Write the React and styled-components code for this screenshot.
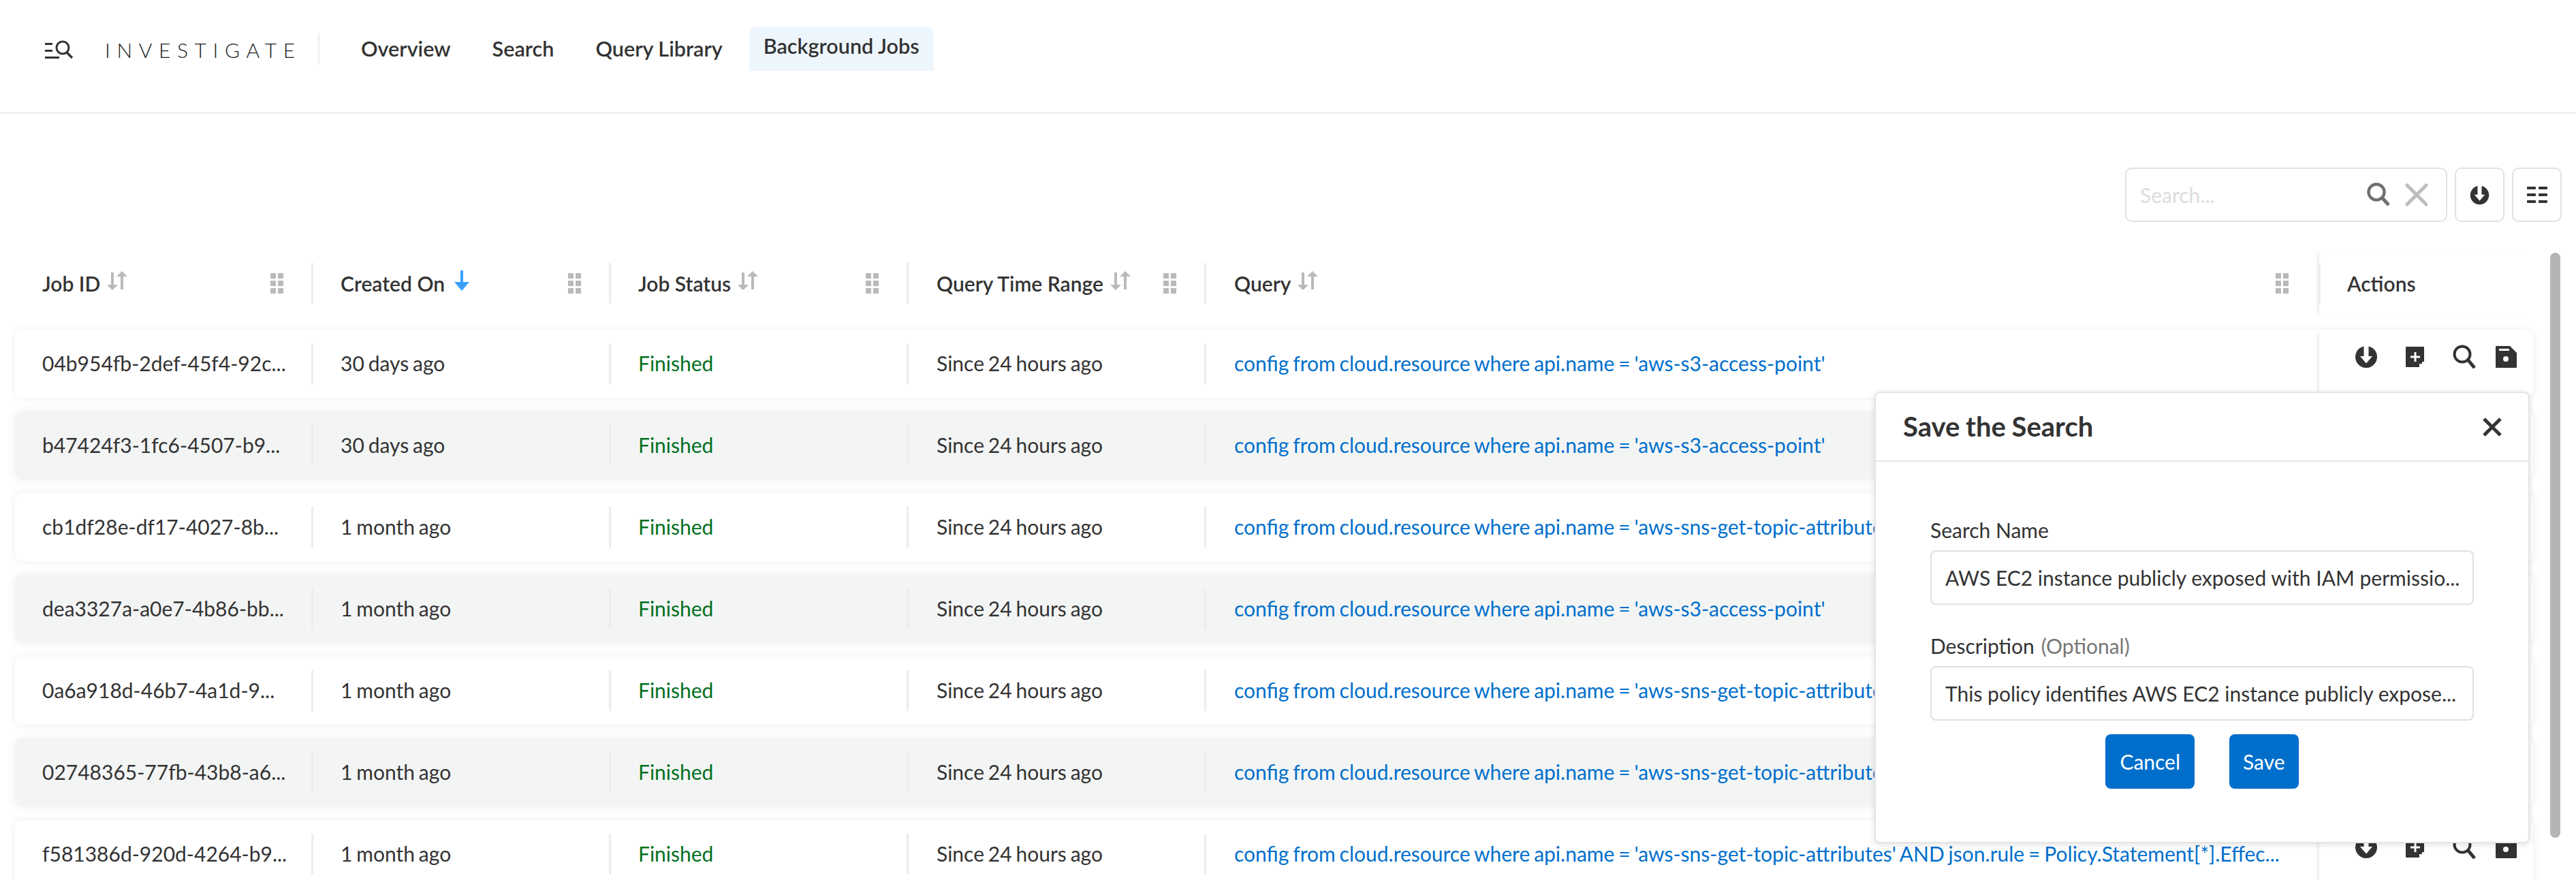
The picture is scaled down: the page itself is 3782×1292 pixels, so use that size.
import React from "react";
import styled, { createGlobalStyle } from "styled-components";

const GlobalStyle = createGlobalStyle`
  * { box-sizing: border-box; }
  html, body { margin: 0; padding: 0; background: #fff; }
  body {
    font-family: Lato, "Open Sans", sans-serif;
    color: #333;
    width: 3782px;
    height: 1292px;
    overflow: hidden;
  }
`;

const Page = styled.div`
  position: relative;
  width: 3782px;
  height: 1292px;
  overflow: hidden;
`;

const Header = styled.header`
  height: 167px;
  border-bottom: 2px solid #ececec;
  display: flex;
  align-items: flex-start;
  padding: 39px 0 0 66px;
`;

const LogoIcon = styled.svg`
  width: 44px;
  height: 30px;
  margin-top: 20px;
  flex: none;
`;

const LogoText = styled.div`
  font-size: 30px;
  font-weight: 300;
  letter-spacing: 9.6px;
  line-height: 36px;
  margin: 16px 0 0 44px;
  width: 313px;
  white-space: nowrap;
  color: #1c1c1c;
`;

const Divider = styled.div`
  width: 2px;
  height: 46px;
  background: #ececec;
  margin-top: 10px;
`;

const Nav = styled.nav`
  display: flex;
  align-items: flex-start;
  margin-left: 61px;
`;

const NavItem = styled.div`
  height: 65px;
  padding: ${(p) => (p.active ? "11px 21px 0" : "15px 0 0")};
  margin-right: ${(p) => (p.active ? "0" : "61px")};
  margin-left: ${(p) => (p.active ? "-22px" : "0")};
  font-size: 30.6px;
  font-weight: 600;
  line-height: 36px;
  white-space: nowrap;
  background: ${(p) => (p.active ? "#eef6fd" : "transparent")};
  border-radius: ${(p) => (p.active ? "10px 10px 0 0" : "0")};
`;

const Toolbar = styled.div`
  display: flex;
  justify-content: flex-end;
  gap: 11px;
  margin-top: 79px;
  padding-right: 21px;
`;

const SearchBox = styled.div`
  width: 473px;
  height: 80px;
  border: 2px solid #e2e2e2;
  border-radius: 10px;
  display: flex;
  align-items: center;
  padding: 0 26px 0 20px;
`;

const Placeholder = styled.span`
  flex: 1;
  font-size: 30px;
  color: #dcdcdc;
`;

const SearchIcon = styled.svg`
  width: 37px;
  height: 36px;
  margin-right: 20px;
  flex: none;
`;

const ClearIcon = styled.svg`
  width: 34px;
  height: 34px;
  flex: none;
`;

const ToolButton = styled.div`
  width: 73px;
  height: 80px;
  border: 2px solid #e2e2e2;
  border-radius: 10px;
  display: flex;
  align-items: center;
  justify-content: center;
`;

const Table = styled.div`
  margin-top: 40px;
  padding-left: 22px;
  width: 3719px;
`;

const HeadRow = styled.div`
  display: flex;
  height: 100px;
  margin-bottom: 18px;
`;

const HeadCell = styled.div`
  width: ${(p) => p.w}px;
  flex: none;
  display: flex;
  align-items: center;
  padding: 0 0 0 ${(p) => p.pad}px;
  font-size: 30px;
  font-weight: 600;
  white-space: nowrap;
  position: relative;
  ${(p) =>
    p.sep &&
    `&::after { content: ""; position: absolute; right: -2px; top: 20px; bottom: 20px; width: 3px; background: #ececec; }`}
`;

const ActionsHead = styled.div`
  flex: 1;
  display: flex;
  align-items: center;
  padding-left: 41px;
  font-size: 30px;
  font-weight: 600;
  box-shadow: -5px 0 6px -4px rgba(0, 0, 0, 0.12);
`;

const SortSvg = styled.svg`
  width: 30px;
  height: 30px;
  margin: -8px 0 0 10px;
  flex: none;
`;

const GripSvg = styled.svg`
  width: 20px;
  height: 30px;
  position: absolute;
  right: ${(p) => (p.last ? 44 : 41)}px;
  top: 35px;
`;

const Rows = styled.div`
  display: flex;
  flex-direction: column;
  gap: 20px;
`;

const Row = styled.div`
  height: 100px;
  display: flex;
  flex: none;
  border-radius: 10px;
  background: ${(p) => (p.alt ? "#f3f5f5" : "#fff")};
  box-shadow: 0 0 14px rgba(0, 0, 0, 0.07);
`;

const Cell = styled.div`
  width: ${(p) => p.w}px;
  flex: none;
  display: flex;
  align-items: center;
  padding: 0 0 0 ${(p) => p.pad}px;
  font-size: 30px;
  font-weight: 400;
  word-spacing: -1.8px;
  color: ${(p) => p.color || "#333"};
  position: relative;
  ${(p) =>
    p.sep &&
    `&::after { content: ""; position: absolute; right: -2px; top: 20px; bottom: 20px; width: 3px; background: #ececec; }`}
`;

const CellText = styled.span`
  display: block;
  white-space: nowrap;
  overflow: hidden;
  text-overflow: ellipsis;
  margin-top: -2px;
`;

const ActionsCell = styled.div`
  flex: 1;
  display: flex;
  align-items: flex-start;
  padding: 22px 0 0 51px;
  background: #fff;
  border-radius: 0 10px 10px 0;
  box-shadow: -5px 0 6px -4px rgba(0, 0, 0, 0.12);
`;

const IconSlot = styled.svg`
  width: 36px;
  height: 36px;
  flex: none;
  margin-right: ${(p) => p.gap}px;
`;

const Scrollbar = styled.div`
  position: absolute;
  left: 3744px;
  top: 371px;
  width: 15px;
  height: 859px;
  background: #b5b5b5;
  border-radius: 8px;
`;

const Modal = styled.div`
  position: absolute;
  left: 2752px;
  top: 575px;
  width: 962px;
  height: 663px;
  background: #fff;
  border: 2px solid #e4e4e4;
  border-radius: 8px;
  box-shadow: 0 2px 10px rgba(0, 0, 0, 0.12);
  display: flex;
  flex-direction: column;
`;

const ModalHeader = styled.div`
  height: 101px;
  border-bottom: 2px solid #e4e4e4;
  display: flex;
  align-items: center;
  justify-content: space-between;
  padding: 0 38px 0 40px;
`;

const ModalTitle = styled.div`
  font-size: 40px;
  font-weight: 700;
  word-spacing: -1px;
  margin-top: -2px;
`;

const ModalBody = styled.div`
  padding: 82px 80px 0;
  display: flex;
  flex-direction: column;
`;

const Label = styled.label`
  font-size: 30px;
  line-height: 36px;
  height: 36px;
  margin-bottom: 12px;
`;

const Optional = styled.span`
  color: #777;
  margin-left: 10px;
`;

const Field = styled.div`
  height: 80px;
  width: 798px;
  border: 2px solid #e0e0e0;
  border-radius: 8px;
  display: flex;
  align-items: center;
  padding: 0 20px;
  font-size: 30px;
  white-space: nowrap;
  overflow: hidden;
  margin-bottom: ${(p) => p.mb}px;
`;

const Buttons = styled.div`
  display: flex;
  justify-content: center;
  gap: 51px;
`;

const Button = styled.div`
  height: 80px;
  padding: 0 ${(p) => p.pad}px;
  background: #006fcc;
  color: #fff;
  border-radius: 8px;
  font-size: 30px;
  display: flex;
  align-items: center;
`;

const columns = [
  { w: 436, pad: 40 },
  { w: 437, pad: 42 },
  { w: 437, pad: 42 },
  { w: 437, pad: 43 },
  { w: 1636, pad: 43 },
];

const heads = ["Job ID", "Created On", "Job Status", "Query Time Range", "Query"];

const s3 = "config from cloud.resource where api.name = 'aws-s3-access-point'";
const sns =
  "config from cloud.resource where api.name = 'aws-sns-get-topic-attributes' AND json.rule = Policy.Statement[*].Effec...";

const jobs = [
  { id: "04b954fb-2def-45f4-92c...", created: "30 days ago", query: s3 },
  { id: "b47424f3-1fc6-4507-b9...", created: "30 days ago", query: s3 },
  { id: "cb1df28e-df17-4027-8b...", created: "1 month ago", query: sns },
  { id: "dea3327a-a0e7-4b86-bb...", created: "1 month ago", query: s3 },
  { id: "0a6a918d-46b7-4a1d-9...", created: "1 month ago", query: sns },
  { id: "02748365-77fb-43b8-a6...", created: "1 month ago", query: sns },
  { id: "f581386d-920d-4264-b9...", created: "1 month ago", query: sns },
];

const Sort = () => (
  <SortSvg viewBox="0 0 30 30" fill="#b9b9b9">
    <rect x="6" y="3" width="4" height="19" />
    <path d="M0 21h16l-8 8z" />
    <rect x="20" y="8" width="4" height="20" />
    <path d="M14 9l8-8 8 8z" />
  </SortSvg>
);

const SortActive = () => (
  <SortSvg viewBox="0 0 30 30" fill="#3aa0ff">
    <rect x="13" y="0" width="4" height="20" />
    <path d="M4 17h22l-11 13z" />
  </SortSvg>
);

const Grip = ({ last }) => (
  <GripSvg viewBox="0 0 20 30" fill="#b9b9b9" last={last}>
    <rect x="0" y="0" width="8" height="8" />
    <rect x="11" y="0" width="8" height="8" />
    <rect x="0" y="11" width="8" height="8" />
    <rect x="11" y="11" width="8" height="8" />
    <rect x="0" y="22" width="8" height="8" />
    <rect x="11" y="22" width="8" height="8" />
  </GripSvg>
);

const DownloadGlyph = () => (
  <path d="M14.5 2.4A16 16 0 1 0 21.5 2.4V17h5.5L18 27.5 9 17h5.5z" fill="#333" />
);

const App = () => (
  <Page>
    <GlobalStyle />
    <Header>
      <LogoIcon viewBox="0 0 44 30">
        <rect x="0" y="4" width="11" height="3" fill="#333" />
        <rect x="0" y="14" width="11" height="3" fill="#333" />
        <rect x="0" y="24" width="21" height="3" fill="#333" />
        <circle cx="26" cy="11" r="9" fill="none" stroke="#333" strokeWidth="3" />
        <path d="M32 18l8 8" stroke="#333" strokeWidth="3.4" />
      </LogoIcon>
      <LogoText>INVESTIGATE</LogoText>
      <Divider />
      <Nav>
        <NavItem>Overview</NavItem>
        <NavItem>Search</NavItem>
        <NavItem>Query Library</NavItem>
        <NavItem active>Background Jobs</NavItem>
      </Nav>
    </Header>
    <Toolbar>
      <SearchBox>
        <Placeholder>Search...</Placeholder>
        <SearchIcon viewBox="0 0 37 36">
          <circle cx="15" cy="14" r="11.5" fill="none" stroke="#707070" strokeWidth="4.4" />
          <path d="M23 22l10 11" stroke="#707070" strokeWidth="5" />
        </SearchIcon>
        <ClearIcon viewBox="0 0 34 34">
          <path d="M3 3l28 28M31 3L3 31" stroke="#bdbdbd" strokeWidth="5" strokeLinecap="round" />
        </ClearIcon>
      </SearchBox>
      <ToolButton>
        <svg width="31" height="31" viewBox="0 0 36 36">
          <DownloadGlyph />
        </svg>
      </ToolButton>
      <ToolButton>
        <svg width="30" height="26" viewBox="0 0 30 26" fill="#333">
          <rect x="0" y="1" width="13" height="4" rx="1" />
          <rect x="17" y="1" width="13" height="4" rx="1" />
          <rect x="0" y="11" width="13" height="4" rx="1" />
          <rect x="17" y="11" width="13" height="4" rx="1" />
          <rect x="0" y="21" width="13" height="4" rx="1" />
          <rect x="17" y="21" width="13" height="4" rx="1" />
        </svg>
      </ToolButton>
    </Toolbar>
    <Table>
      <HeadRow>
        {heads.map((h, i) => (
          <HeadCell key={h} w={columns[i].w} pad={columns[i].pad} sep>
            {h}
            {i === 1 ? <SortActive /> : <Sort />}
            <Grip last={i === heads.length - 1} />
          </HeadCell>
        ))}
        <ActionsHead>Actions</ActionsHead>
      </HeadRow>
      <Rows>
        {jobs.map((job, idx) => (
          <Row key={job.id} alt={idx % 2 === 1}>
            <Cell w={columns[0].w} pad={columns[0].pad} sep>
              <CellText>{job.id}</CellText>
            </Cell>
            <Cell w={columns[1].w} pad={columns[1].pad} sep>
              <CellText>{job.created}</CellText>
            </Cell>
            <Cell w={columns[2].w} pad={columns[2].pad} color="#00701f" sep>
              <CellText>Finished</CellText>
            </Cell>
            <Cell w={columns[3].w} pad={columns[3].pad} sep>
              <CellText>Since 24 hours ago</CellText>
            </Cell>
            <Cell w={1636} pad={43} color="#006fcc">
              <CellText>{job.query}</CellText>
            </Cell>
            <ActionsCell>
              <IconSlot viewBox="0 0 36 36" gap={36}>
                <DownloadGlyph />
              </IconSlot>
              <IconSlot viewBox="0 0 36 36" fill="#333" gap={36}>
                <path
                  fillRule="evenodd"
                  d="M5 3h25a1 1 0 0 1 1 1v21l-3 0v3h-4v5H5a1 1 0 0 1-1-1V4a1 1 0 0 1 1-1zM16.5 11v5.5H11v3h5.500V25h3v-5.500H25v-3h-5.500V11z"
                />
              </IconSlot>
              <IconSlot viewBox="0 0 36 36" gap={25}>
                <circle cx="15" cy="14" r="11.5" fill="none" stroke="#333" strokeWidth="4" />
                <path d="M23 22l10 12" stroke="#333" strokeWidth="5" />
              </IconSlot>
              <IconSlot viewBox="0 0 36 36" fill="#333" gap={0}>
                <path
                  fillRule="evenodd"
                  d="M4 2h20l10 10v21a1 1 0 0 1-1 1H4a1 1 0 0 1-1-1V3a1 1 0 0 1 1-1zM8 6v3h15V6zM18 17a4 4 0 1 0 0 8 4 4 0 0 0 0-8z"
                />
              </IconSlot>
            </ActionsCell>
          </Row>
        ))}
      </Rows>
    </Table>
    <Scrollbar />
    <Modal>
      <ModalHeader>
        <ModalTitle>Save the Search</ModalTitle>
        <svg width="30" height="30" viewBox="0 0 30 30">
          <path d="M3 3l24 24M27 3L3 27" stroke="#333" strokeWidth="5" />
        </svg>
      </ModalHeader>
      <ModalBody>
        <Label>Search Name</Label>
        <Field mb={42}>AWS EC2 instance publicly exposed with IAM permissio...</Field>
        <Label>
          Description<Optional>(Optional)</Optional>
        </Label>
        <Field mb={20}>This policy identifies AWS EC2 instance publicly expose...</Field>
        <Buttons>
          <Button pad={21}>Cancel</Button>
          <Button pad={20}>Save</Button>
        </Buttons>
      </ModalBody>
    </Modal>
  </Page>
);

export default App;
